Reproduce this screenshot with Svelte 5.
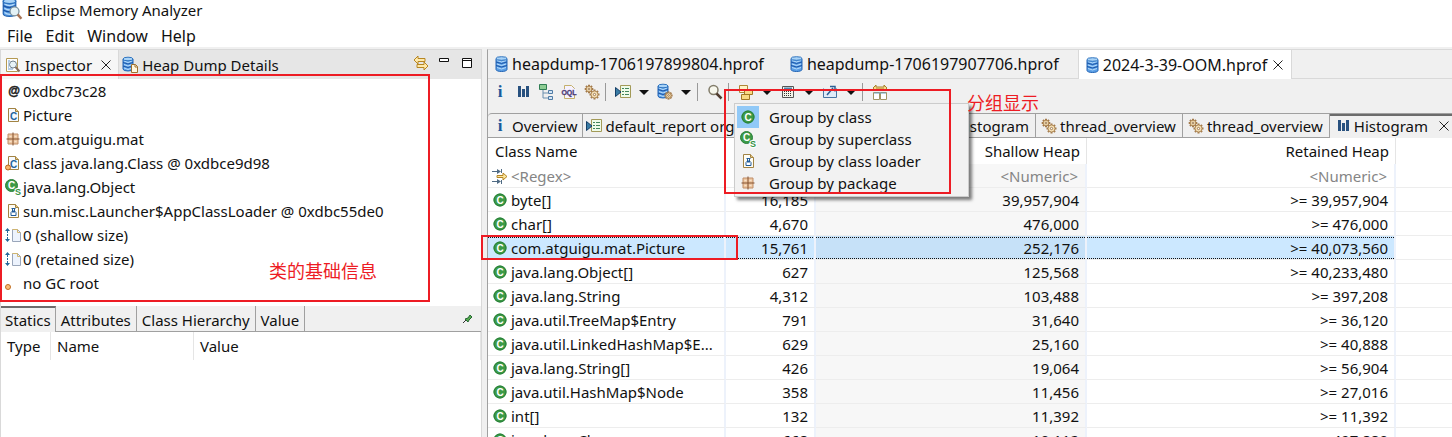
<script>
  const menus = ['File', 'Edit', 'Window', 'Help'];
  const details = [
    ['at', '0xdbc73c28'],
    ['cfile', 'Picture'],
    ['package', 'com.atguigu.mat'],
    ['cinst', 'class java.lang.Class @ 0xdbce9d98'],
    ['super', 'java.lang.Object'],
    ['loader', 'sun.misc.Launcher$AppClassLoader @ 0xdbc55de0'],
    ['size', '0 (shallow size)'],
    ['size', '0 (retained size)'],
    ['dot', 'no GC root']
  ];
  const lowerTabs = ['Statics', 'Attributes', 'Class Hierarchy', 'Value'];
  const editors = ['heapdump-1706197899804.hprof', 'heapdump-1706197907706.hprof', '2024-3-39-OOM.hprof'];
  const tools = [
    ['info', 'Overview'], ['bars', 'Histogram'], ['tree', 'Dominator tree'], ['oql', 'Query'], ['gears', 'Threads'], null,
    ['report', 'Reports', 1], ['dbgear', 'Queries', 1], null, ['search', 'Find'], null,
    ['group', 'Group', 1], ['calc', 'Calculate', 1], ['export', 'Export', 1], null, ['compare', 'Compare']
  ];
  const pages = [
    ['info', 'Overview', 'first'],
    ['report', 'default_report org', 'wide'],
    ['bars', 'Histogram', ''],
    ['gears', 'thread_overview', ''],
    ['gears', 'thread_overview', ''],
    ['bars', 'Histogram', 'current']
  ];
  const groups = [
    ['class', 'Group by class'],
    ['super', 'Group by superclass'],
    ['loader', 'Group by class loader'],
    ['package', 'Group by package']
  ];
  const rows = [
    ['byte[]', '16,185', '39,957,904', '39,957,904'],
    ['char[]', '4,670', '476,000', '476,000'],
    ['com.atguigu.mat.Picture', '15,761', '252,176', '40,073,560'],
    ['java.lang.Object[]', '627', '125,568', '40,233,480'],
    ['java.lang.String', '4,312', '103,488', '397,208'],
    ['java.util.TreeMap$Entry', '791', '31,640', '36,120'],
    ['java.util.LinkedHashMap$E...', '629', '25,160', '40,888'],
    ['java.lang.String[]', '426', '19,064', '56,904'],
    ['java.util.HashMap$Node', '358', '11,456', '27,016'],
    ['int[]', '132', '11,392', '11,392'],
    ['java.lang.Class', '668', '10,112', '497,880']
  ];
  const teeth = [0, 45, 90, 135, 180, 225, 270, 315];
</script>

{#snippet gear(x, y, r)}
  <g transform="translate({x} {y})">
    {#each teeth as a}
      <path d="M-1 {-r - 1.5}h2v2h-2z" fill="#a3794a" transform="rotate({a})" />
    {/each}
    <circle r={r} fill="#f8e3b8" stroke="#b08a58" />
    <circle r={r / 3} fill="#fff" stroke="#8a6238" stroke-width="0.800" />
  </g>
{/snippet}

{#snippet disks(x, y, w, h)}
  <g transform="translate({x} {y})">
    <path d="M0 2v{h - 4}a{w / 2} 2 0 0 0 {w} 0V2z" fill="#5b9fe6" stroke="#2465b4" />
    <path d="M1 4q{w / 2 - 1} 3 {w - 2} 0M1 7.500q{w / 2 - 1} 3 {w - 2} 0M1 11q{w / 2 - 1} 3 {w - 2} 0" fill="none" stroke="#b9dcfa" />
    <path d="M0 5.500q{w / 2} 3 {w} 0M0 9q{w / 2} 3 {w} 0" fill="none" stroke="#1c56a8" />
    <ellipse cx={w / 2} cy="2" rx={w / 2} ry="1.800" fill="#a9d3f7" stroke="#2f74c0" />
  </g>
{/snippet}

{#snippet icon(name)}
  <svg class="icon" viewBox="0 0 16 16" aria-hidden="true">
    {#if name === 'db'}
      {@render disks(3, 0.5, 11, 15)}
    {:else if name === 'app'}
      {@render disks(1, -1, 10, 14)}
      <circle cx="10" cy="9" r="3.600" fill="#e4f2f6" stroke="#788f9c" />
      <path d="M12.500 11.500l3 3.500" stroke="#a77455" stroke-width="2" />
    {:else if name === 'dbfile'}
      {@render disks(1, 0, 10, 14)}
      <path d="M9.500 7.500h4l2 2v6h-6z" fill="#fff7df" stroke="#a0702c" />
      <path d="M13 7.500v2.500h2.500" fill="none" stroke="#a0702c" />
    {:else if name === 'dbgear'}
      {@render disks(1, 0, 10, 14)}
      {@render gear(11.500, 11.500, 2.600)}
    {:else if name === 'inspect'}
      <path d="M1.500 1.500h11v13h-11z" fill="#fff" stroke="#b59a52" />
      <path d="M3 4h2M3 6h1M3 8h1M3 10h1M3 12h5" stroke="#6d9bcb" />
      <circle cx="8" cy="7.500" r="3.500" fill="#e8f3f7" stroke="#71818d" />
      <path d="M10.500 10l4 4.500" stroke="#876d59" stroke-width="2" />
    {:else if name === 'at'}
      <text x="9" y="12" text-anchor="middle" font-size="12" font-weight="700" fill="#222" stroke="#222" stroke-width="0.500">@</text>
    {:else if name === 'cfile' || name === 'cinst'}
      <path d="M3.500 1.500h7l3 3v10h-10z" fill="#f6faff" stroke="#a28343" />
      <path d="M10.500 1.500v3h3" fill="#e6c987" stroke="#a28343" />
      <text x="8.500" y="12.500" text-anchor="middle" font-size="10" font-weight="700" fill="#24649e">C</text>
      {#if name === 'cinst'}<circle cx="3" cy="12.500" r="2.500" fill="#f7b66c" stroke="#b9661d" />{/if}
    {:else if name === 'package'}
      <path d="M3 3h10v10H3z" fill="#edc7a2" stroke="#c08d66" />
      <path d="M8 1.500v13M1.500 8h13" stroke="#83502f" />
      <path d="M4.500 5.500h2M9.500 5.500h2M4.500 10.500h2M9.500 10.500h2" stroke="#f8e2ca" />
    {:else if name === 'class'}
      <circle cx="8" cy="8" r="6.500" fill="#3d9a45" />
      <circle cx="8" cy="8" r="6" fill="none" stroke="#277f3b" />
      <text x="8" y="11.500" text-anchor="middle" font-size="10" font-weight="700" fill="#fff">C</text>
    {:else if name === 'super'}
      <circle cx="6.500" cy="6.500" r="6" fill="#3d9a45" stroke="#277f3b" />
      <text x="6.500" y="10" text-anchor="middle" font-size="10" font-weight="700" fill="#fff">C</text>
      <text x="13" y="16" text-anchor="middle" font-size="9" font-weight="700" fill="#359143" stroke="#fff" stroke-width="2" paint-order="stroke">S</text>
    {:else if name === 'loader'}
      <path d="M3.500 1.500h7l3 3v10h-10z" fill="#fffdf4" stroke="#a28343" />
      <path d="M10.500 1.500v3h3" fill="#e6c987" stroke="#a28343" />
      <path d="M6.500 5.500h4M7.500 6v2l-1.500 1.500v3h5v-3l-1.500-1.500V6" fill="#fff" stroke="#205b99" />
      <path d="M7 8.500h3" stroke="#205b99" stroke-width="2" />
    {:else if name === 'size'}
      <path d="M2.500 4v9" stroke="#246799" stroke-dasharray="2 1" />
      <path d="M0 4l2.500-3L5 4zM0 12l2.500 3L5 12z" fill="#246799" />
      <path d="M7.500 2.500h5l3 3v9h-8z" fill="#edf3fd" stroke="#9aa6ba" />
      <path d="M7.500 2.500h5v3h3" fill="none" stroke="#d1b56e" />
    {:else if name === 'dot'}
      <circle cx="3" cy="12" r="2.500" fill="#f9bd78" stroke="#c26f22" />
    {:else if name === 'info'}
      <text class="serif" x="8" y="13" text-anchor="middle" font-size="17" font-weight="700" fill="#1a5a9c">i</text>
    {:else if name === 'bars'}
      <path d="M3 2h3v11H3zM7 5h3v8H7zM11 2h3v11h-3z" fill="#28517f" />
    {:else if name === 'tree'}
      <path d="M5 6v8h5M5 9h5" fill="none" stroke="#6b8fae" />
      <path d="M1.500.500h7v5h-7z" fill="#8dcc93" stroke="#2f7d53" />
      <path d="M10.500 6.500h4v3h-4zM10.500 12.500h4v3h-4z" fill="#d5e6f6" stroke="#4f7ba5" />
    {:else if name === 'oql'}
      <path d="M3.500 1.500h7l3 3v10h-10z" fill="#f5f1ff" stroke="#c4b06b" />
      <path d="M1 5h14v6H1z" fill="#f5f1ff" />
      <text x="8" y="11" text-anchor="middle" font-size="7" font-weight="700" fill="#4b3a74" stroke="#4b3a74" stroke-width="0.300">OQL</text>
    {:else if name === 'gears'}
      {@render gear(5, 5, 2.800)}
      {@render gear(10.500, 10.500, 3.500)}
    {:else if name === 'report'}
      <path d="M5.500 1.500h10v12h-10z" fill="#effbe9" stroke="#a39a58" />
      <path d="M7 4.500h2m1 0h4M7 7.500h2m1 0h4M7 10.500h2m1 0h4" stroke="#43865c" />
      <path d="M.500 3.500v9l5.500-4.500z" fill="#397ca5" stroke="#163f67" />
    {:else if name === 'search'}
      <circle cx="6.500" cy="6" r="4.500" fill="#f7f7ed" stroke="#827c6a" stroke-width="1.500" />
      <path d="M9.500 9.500l5 5" stroke="#513c30" stroke-width="2.500" />
    {:else if name === 'group'}
      <path d="M1.500 1.500h8v7h-8z" fill="#fff4c7" stroke="#af8736" />
      <path d="M6.500 5.500h8v5h-8zM3.500 10.500h8v5h-8z" fill="#f7d982" stroke="#a17822" />
    {:else if name === 'calc'}
      <path d="M2.500 2.500h11v11h-11z" fill="#f4f4e9" stroke="#555" />
      <path d="M4 4.500h8" stroke="#4d82ad" stroke-width="2" />
      <path d="M4 7.500h8M4 9.500h8M4 11.500h8" stroke="#333" stroke-dasharray="1 1" />
    {:else if name === 'export'}
      <path d="M1.500 4.500v9h13v-9" fill="#dfebf8" stroke="#4875a4" />
      <path d="M5 11l6-7M8 2.500h5v5" fill="none" stroke="#2c5f94" stroke-width="1.500" />
    {:else if name === 'compare'}
      <path d="M1 4l3-3v2h8V1l3 3-3 3V5H4v2z" fill="#f8db8b" stroke="#a6802a" />
      <path d="M1.500 8.500h6v7h-6zM8.500 8.500h6v7h-6z" fill="#fff" stroke="#a09564" />
      <path d="M2 9h12" stroke="#6f9fbc" />
    {:else if name === 'sync'}
      <path d="M1 5l4-4v2.500h7v3H5V9z" fill="#ffe9a9" stroke="#b78622" />
      <path d="M15 11l-4-4v2.500H4v3h7V15z" fill="#ffe9a9" stroke="#b78622" />
    {:else if name === 'filter'}
      <path d="M0 3.500h6M0 13.500h6M9.500 1v4M9.500 12v4" stroke="#506b84" />
      <path d="M5 1l4 2.500L5 6zM5 11l4 2.500L5 16z" fill="#506b84" />
      <path d="M5 7.500h6V5l4 3.500-4 3.500V9.500H5z" fill="#fce79e" stroke="#b58422" />
    {:else if name === 'close'}
      <path d="M3.500 3.500l9 9M12.500 3.500l-9 9" stroke="#222" />
    {:else if name === 'min'}
      <path d="M3.500 3.500h9v3h-9z" fill="#fff" stroke="#111" />
    {:else if name === 'max'}
      <path d="M3.500 3.500h9v9h-9z" fill="#fff" stroke="#111" /><path d="M3 5.500h10" stroke="#111" />
    {:else if name === 'pin'}
      <path d="M4 12l3-3" stroke="#333" /><path d="M6 8l3-1 2-3 2 2-3 3-1 2z" fill="#56ab4c" stroke="#276837" />
    {/if}
  </svg>
{/snippet}

<div class="window">
  <header class="title">{@render icon('app')}<span>Eclipse Memory Analyzer</span></header>
  <nav class="menubar">
    {#each menus as m}<button>{m}</button>{/each}
  </nav>

  <main>
    <section class="side">
      <div class="viewtabs">
        <button class="viewtab on">{@render icon('inspect')}<span>Inspector</span>{@render icon('close')}</button>
        <button class="viewtab">{@render icon('dbfile')}<span>Heap Dump Details</span></button>
        <div class="viewtools">
          <button aria-label="Link with snapshot">{@render icon('sync')}</button>
          <button aria-label="Minimize">{@render icon('min')}</button>
          <button aria-label="Maximize">{@render icon('max')}</button>
        </div>
      </div>
      <ul class="details">
        {#each details as [ic, label]}<li>{@render icon(ic)}<span>{label}</span></li>{/each}
      </ul>
      <div class="lowertabs">
        {#each lowerTabs as t, i}<button class:on={i === 0}>{t}</button>{/each}
        <button class="pin" aria-label="Pin tab">{@render icon('pin')}</button>
      </div>
      <table class="fields">
        <colgroup><col class="f1" /><col class="f2" /><col /></colgroup>
        <thead><tr><th>Type</th><th>Name</th><th>Value</th></tr></thead>
      </table>
      <div class="mark mark-info"></div>
      <div class="note note-info">类的基础信息</div>
    </section>

    <section class="editor">
      <div class="edtabs">
        {#each editors as e, i}
          <button class="edtab" class:on={i === 2}>
            {@render icon('db')}<span>{e}</span>{@render icon(i === 2 ? 'close' : '')}
          </button>
        {/each}
      </div>
      <div class="toolbar">
        {#each tools as t}
          {#if t}
            <button class="tool" aria-label={t[1]}>{@render icon(t[0])}</button>
            {#if t[2]}<button class="drop" aria-label="{t[1]} menu"><i></i></button>{/if}
          {:else}
            <span class="sep"></span>
          {/if}
        {/each}
      </div>
      <div class="pages">
        {#each pages as [ic, label, kind]}
          <button class="page {kind}">{@render icon(ic)}<span>{label}</span>{#if kind === 'current'}{@render icon('close')}{/if}</button>
        {/each}
      </div>
      <table class="histogram">
        <colgroup><col class="c1" /><col class="c2" /><col class="c3" /><col class="c4" /><col /></colgroup>
        <thead>
          <tr><th>Class Name</th><th></th><th>Shallow Heap</th><th>Retained Heap</th><th></th></tr>
        </thead>
        <tbody>
          <tr class="filter">
            <td><div class="name">{@render icon('filter')}<span>&lt;Regex&gt;</span></div></td>
            <td></td><td>&lt;Numeric&gt;</td><td>&lt;Numeric&gt;</td><td></td>
          </tr>
          {#each rows as r, i}
            <tr class:selected={i === 2}>
              <td><div class="name">{@render icon('class')}<span>{r[0]}</span></div></td>
              <td>{r[1]}</td><td>{r[2]}</td><td>&gt;= {r[3]}</td><td></td>
            </tr>
          {/each}
        </tbody>
      </table>

      <div class="popup" role="menu">
        {#each groups as [ic, label], i}
          <button role="menuitem"><span class="cell" class:on={i === 0}>{@render icon(ic)}</span>{label}</button>
        {/each}
      </div>
      <div class="mark mark-menu"></div>
      <div class="mark mark-row"></div>
      <div class="note note-menu">分组显示</div>
    </section>
  </main>
</div>

<style>
  :global(body) { background: #fff; }
  .window {
    height: 100vh;
    overflow: hidden;
    display: flex;
    flex-direction: column;
    font: 15px/20px "Noto Sans", "Noto Sans CJK SC", sans-serif;
    color: #111;
    white-space: nowrap;
  }
  button {
    font: inherit;
    color: inherit;
    background: none;
    border: 0;
    padding: 0;
    margin: 0;
    display: flex;
    align-items: center;
    white-space: nowrap;
  }
  .icon { width: 16px; height: 16px; flex: none; display: block; overflow: visible; font-family: "Liberation Sans", sans-serif; }
  .serif { font-family: "Liberation Serif", serif; }
  .title { display: flex; gap: 5px; height: 24px; padding-left: 2px; }
  .title .icon { width: 20px; height: 20px; }
  .menubar { display: flex; gap: 13px; height: 23px; padding-left: 7px; font-size: 16px; }
  main { flex: 1; min-height: 0; display: flex; gap: 5px; background: #f0f0f0; padding-top: 2px; }

  .side { position: relative; flex: 0 0 482px; box-sizing: border-box; display: flex; flex-direction: column; background: #fff; border: 1px solid #d9d9d9; border-bottom: 0; }
  .viewtabs { display: flex; height: 29px; flex: none; background: #e6e6e6; }
  .viewtab { gap: 4px; padding: 0 3px; }
  .viewtab.on { background: #f6f6f6; border-right: 1px solid #d9d9d9; padding: 0 4px; }
  .viewtab .icon:last-child { margin-left: 2px; }
  .viewtools { margin-left: auto; display: flex; align-items: center; gap: 7px; padding-right: 6px; padding-bottom: 4px; }
  .details { list-style: none; margin: 0; padding: 0 0 0 4px; height: 227px; flex: none; }
  .details li { display: flex; align-items: center; gap: 2px; height: 24px; }
  .lowertabs { display: flex; height: 26px; flex: none; box-sizing: border-box; background: #f0f0f0; border-bottom: 1px solid #a0a0a0; }
  .lowertabs button { padding: 2px 5px 0; border-right: 1px solid #a0a0a0; }
  .lowertabs .on { border-top: 2px solid #6b6b6b; padding: 0 4px; margin-bottom: -1px; background: #f0f0f0; }
  .lowertabs .pin { margin-left: auto; border: 0; padding: 0 6px 0 0; }
  table { border-collapse: separate; border-spacing: 0; table-layout: fixed; width: 100%; }
  th { font-weight: 400; text-align: left; padding: 0; }
  .fields th { height: 28px; padding-left: 6px; border-right: 1px solid #e5e5e5; }
  .f1 { width: 50px; }
  .f2 { width: 143px; }

  .editor { position: relative; flex: 1; min-width: 0; display: flex; flex-direction: column; border-left: 1px solid #a0a0a0; border-top: 1px solid #d9d9d9; }
  .edtabs { display: flex; height: 29px; flex: none; box-sizing: border-box; border-bottom: 1px solid #d9d9d9; }
  .edtab { gap: 3px; padding: 0 0 0 5px; font-size: 16px; }
  .edtab.on { background: #fff; margin-bottom: -1px; border: solid #d9d9d9; border-width: 0 1px; padding-right: 5px; }
  .toolbar { display: flex; height: 34px; flex: none; box-sizing: border-box; padding-bottom: 8px; }
  .tool { width: 23px; justify-content: center; }
  .drop { width: 19px; justify-content: center; }
  .drop i { border: 5px solid transparent; border-top-color: #111; border-bottom: 0; }
  .sep { width: 8px; height: 18px; margin-top: 4px; background: linear-gradient(#999, #999) 2px 0 / 1px 100% no-repeat; }
  .pages { display: flex; height: 25px; flex: none; box-sizing: border-box; border-top: 1px solid #a0a0a0; border-bottom: 1px solid #a0a0a0; border-top-left-radius: 4px; }
  .page { gap: 3px; padding: 0 6px 0 5px; border-right: 1px solid #a0a0a0; flex: none; }
  .page.first { gap: 4px; padding: 0 5px 0 4px; }
  .page.wide { flex: 1 1 0; min-width: 0; overflow: hidden; padding-left: 3px; }
  .page.current { border-right: 0; padding-right: 0; margin-bottom: -1px; background: linear-gradient(#6b6b6b, #6b6b6b) 0 0 / 100% 2px no-repeat #f0f0f0; }
  .page.current .icon:last-child { margin-left: 5px; }

  .histogram { background: #fff; }
  .c1 { width: 238px; }
  .c2 { width: 90px; }
  .c3 { width: 271px; }
  .c4 { width: 309px; }
  .histogram th { height: 26px; padding: 0 6px 0 7px; border-right: 1px solid #e5e5e5; }
  .histogram th + th { text-align: right; }
  .histogram td { height: 23px; padding: 0 6px 0 4px; text-align: right; border-right: 2px solid #edf2fb; border-bottom: 1px solid #ededed; }
  .histogram td:first-child { padding-right: 0; }
  .histogram td:nth-child(3) { background-color: #f7f7f7; }
  .histogram td:last-child, .histogram th:last-child { border-right: 0; }
  .histogram .filter td { color: #858585; padding-right: 7px; }
  .name { display: flex; align-items: center; gap: 3px; }
  .selected td:not(:last-child) {
    background-color: #cce8ff;
    background-image: repeating-linear-gradient(90deg, #111 0 1px, transparent 1px 2px), repeating-linear-gradient(90deg, #111 0 1px, transparent 1px 2px);
    background-size: 100% 1px;
    background-position: 0 1px, 0 22px;
    background-repeat: no-repeat;
  }
  .histogram .selected td:nth-child(3) { background-color: #c6e1f8; }

  .popup { position: absolute; left: 246px; top: 53px; width: 235px; box-sizing: border-box; background: #f2f2f2; border: 1px solid #ccc; padding: 2px; box-shadow: 3px 3px 3px rgba(0, 0, 0, 0.5); }
  .popup button { height: 22px; gap: 10px; width: 100%; }
  .popup .cell { width: 22px; height: 22px; display: grid; place-items: center; }
  .popup .cell.on { background: #91c9f7; }

  .mark { position: absolute; box-sizing: border-box; border: 2px solid #ed1c24; pointer-events: none; }
  .mark-info { left: -1px; top: 24px; width: 430px; height: 228px; }
  .mark-menu { left: 236px; top: 39px; width: 227px; height: 105px; }
  .mark-row { left: -7px; top: 185px; width: 257px; height: 25px; }
  .note { position: absolute; color: #ed1c24; font: 18px/24px "Noto Sans CJK SC", sans-serif; }
  .note-info { left: 268px; top: 208px; }
  .note-menu { left: 479px; top: 40px; }
</style>
